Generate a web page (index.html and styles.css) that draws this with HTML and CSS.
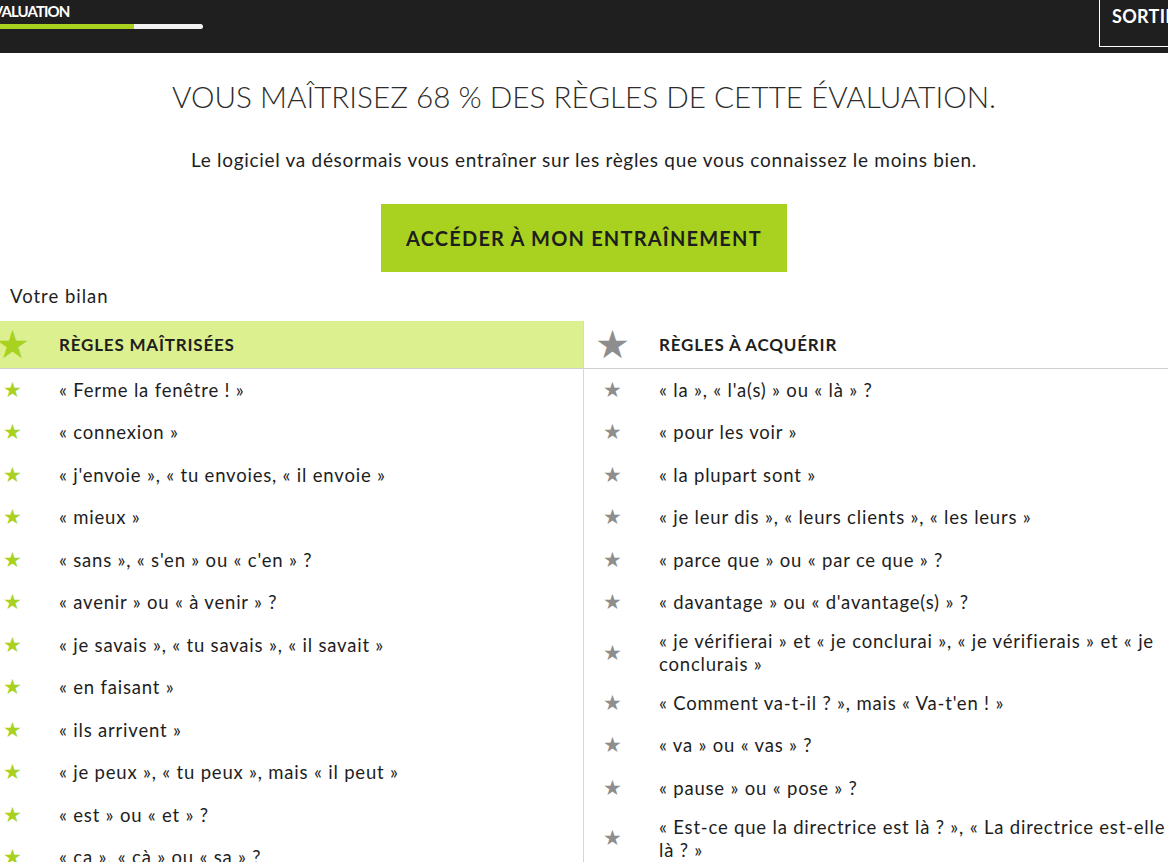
FILE: index.html
```html
<!DOCTYPE html>
<html lang="fr">
<head>
<meta charset="utf-8">
<title>Bilan</title>
<link rel="stylesheet" href="styles.css">
</head>
<body>
<div class="page">
  <header class="topbar">
    <div class="brand">
      <div class="brand-title">ÉVALUATION</div>
      <div class="progress"><div class="progress-fill" style="width:68.5%"></div></div>
    </div>
    <div class="exit">SORTIE</div>
  </header>

  <main class="content">
    <h1 class="title">VOUS MAÎTRISEZ 68 % DES RÈGLES DE CETTE ÉVALUATION.</h1>
    <p class="lead">Le logiciel va désormais vous entraîner sur les règles que vous connaissez le moins bien.</p>
    <div class="cta-wrap"><a class="cta">ACCÉDER À MON ENTRAÎNEMENT</a></div>

    <div class="bilan-label">Votre bilan</div>

    <div class="bilan">
      <section class="col col-ok">
        <div class="col-head"><span class="star big">★</span><span class="head-text">RÈGLES MAÎTRISÉES</span></div>
        <div class="row"><span class="star">★</span><span class="txt">« Ferme la fenêtre ! »</span></div>
        <div class="row"><span class="star">★</span><span class="txt">« connexion »</span></div>
        <div class="row"><span class="star">★</span><span class="txt">« j'envoie », « tu envoies, « il envoie »</span></div>
        <div class="row"><span class="star">★</span><span class="txt">« mieux »</span></div>
        <div class="row"><span class="star">★</span><span class="txt">« sans », « s'en » ou « c'en » ?</span></div>
        <div class="row"><span class="star">★</span><span class="txt">« avenir » ou « à venir » ?</span></div>
        <div class="row"><span class="star">★</span><span class="txt">« je savais », « tu savais », « il savait »</span></div>
        <div class="row"><span class="star">★</span><span class="txt">« en faisant »</span></div>
        <div class="row"><span class="star">★</span><span class="txt">« ils arrivent »</span></div>
        <div class="row"><span class="star">★</span><span class="txt">« je peux », « tu peux », mais « il peut »</span></div>
        <div class="row"><span class="star">★</span><span class="txt">« est » ou « et » ?</span></div>
        <div class="row"><span class="star">★</span><span class="txt">« ça », « çà » ou « sa » ?</span></div>
      </section>
      <section class="col col-todo">
        <div class="col-head"><span class="star big">★</span><span class="head-text">RÈGLES À ACQUÉRIR</span></div>
        <div class="row"><span class="star">★</span><span class="txt">« la », « l'a(s) » ou « là » ?</span></div>
        <div class="row"><span class="star">★</span><span class="txt">« pour les voir »</span></div>
        <div class="row"><span class="star">★</span><span class="txt">« la plupart sont »</span></div>
        <div class="row"><span class="star">★</span><span class="txt">« je leur dis », « leurs clients », « les leurs »</span></div>
        <div class="row"><span class="star">★</span><span class="txt">« parce que » ou « par ce que » ?</span></div>
        <div class="row"><span class="star">★</span><span class="txt">« davantage » ou « d'avantage(s) » ?</span></div>
        <div class="row"><span class="star">★</span><span class="txt">« je vérifierai » et « je conclurai », « je vérifierais » et « je conclurais »</span></div>
        <div class="row"><span class="star">★</span><span class="txt">« Comment va-t-il ? », mais « Va-t'en ! »</span></div>
        <div class="row"><span class="star">★</span><span class="txt">« va » ou « vas » ?</span></div>
        <div class="row"><span class="star">★</span><span class="txt">« pause » ou « pose » ?</span></div>
        <div class="row"><span class="star">★</span><span class="txt">« Est-ce que la directrice est là ? », « La directrice est-elle là ? »</span></div>
      </section>
    </div>
  </main>
</div>
</body>
</html>
```

FILE: styles.css
```css
html, body {
  margin: 0;
  padding: 0;
  overflow: hidden;
  background: #fff;
}
.page {
  width: 1200px;
  margin-left: -16px;
  font-family: "Lato", "DejaVu Sans", sans-serif;
  color: #1e1e1e;
}
.topbar {
  height: 53px;
  background: #1f1f1f;
  display: flex;
  justify-content: space-between;
  align-items: flex-start;
}
.brand {
  width: 219px;
}
.brand-title {
  color: #fff;
  font-weight: 700;
  font-size: 15px;
  line-height: 22px;
  margin-left: 1px;
  letter-spacing: -0.9px;
}
.progress {
  margin-top: 2px;
  height: 5px;
  background: #f2f2f2;
  border-radius: 0 3px 3px 0;
  overflow: hidden;
}
.progress-fill {
  height: 100%;
  background: #a8d21f;
}
.exit {
  width: 85px;
  height: 47px;
  border-left: 1px solid #fff;
  border-bottom: 1px solid #fff;
  color: #fff;
  font-weight: 700;
  font-size: 18px;
  letter-spacing: 0.3px;
  padding: 5px 0 0 12px;
  box-sizing: border-box;
  white-space: nowrap;
}
.content {
  display: flex;
  flex-direction: column;
}
.title {
  margin: 24px 0 0;
  text-align: center;
  font-weight: 300;
  font-size: 29.7px;
  line-height: 40px;
  color: #2c2c2c;
  letter-spacing: 0;
}
.lead {
  margin: 31px 0 0;
  text-align: center;
  font-size: 19px;
  line-height: 24px;
  color: #1e1e1e;
  letter-spacing: 0.7px;
}
.cta-wrap {
  display: flex;
  justify-content: center;
  margin-top: 32px;
}
.cta {
  display: block;
  width: 406px;
  height: 68px;
  line-height: 68px;
  text-align: center;
  background: #a8d21f;
  color: #1e1e1e;
  font-size: 20px;
  font-weight: 700;
  letter-spacing: 1.2px;
}
.bilan-label {
  margin: 13px 0 0 26px;
  font-size: 18.5px;
  letter-spacing: 1px;
  line-height: 22px;
}
.bilan {
  margin-top: 14px;
  display: grid;
  grid-template-columns: 600px 600px;
}
.col-ok {
  border-right: 1px solid #d6d6d6;
}
.col-head {
  height: 47px;
  display: flex;
  align-items: center;
  border-bottom: 1px solid #cfcfcf;
}
.col-ok .col-head {
  background: #dcf08f;
}
.head-text {
  font-size: 17px;
  letter-spacing: 0.8px;
  color: #1e1e1e;
  font-weight: 700;
}
.star {
  width: 75px;
  flex: none;
  padding-left: 19px;
  box-sizing: border-box;
  font-size: 21px;
  line-height: 1;
  font-family: "DejaVu Sans", sans-serif;
}
.star.big {
  font-size: 39px;
  padding-left: 11px;
}
.col-ok .star { color: #a8d21f; }
.col-todo .star { color: #8e8e8e; }
.row {
  min-height: 42.5px;
  padding: 6px 0;
  box-sizing: border-box;
  display: flex;
  align-items: center;
}
.txt {
  font-size: 18.5px;
  line-height: 23px;
  letter-spacing: 0.8px;
  color: #1e1e1e;
  padding-right: 10px;
}
```
